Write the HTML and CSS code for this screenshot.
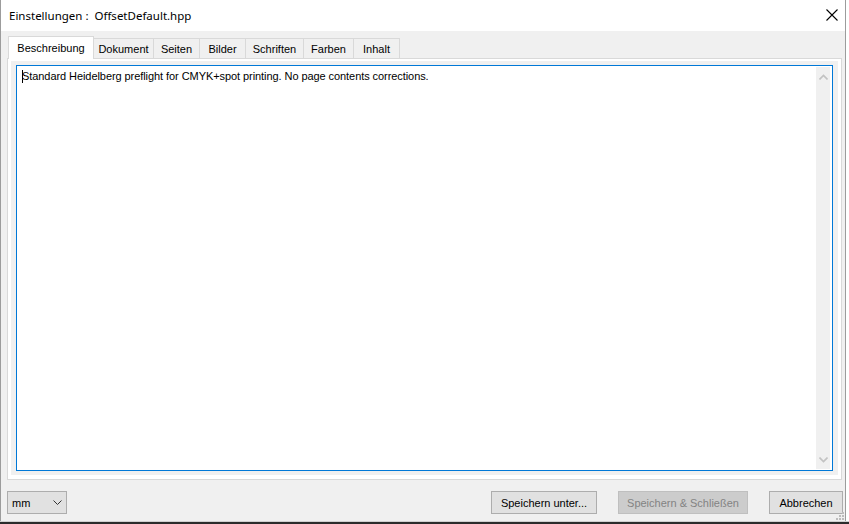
FILE: index.html
```html
<!DOCTYPE html>
<html>
<head>
<meta charset="utf-8">
<link rel="stylesheet" href="styles.css">
</head>
<body>
<div class="window">
  <div class="titlebar">
    <span class="title">Einstellungen :&nbsp; OffsetDefault.hpp</span>
    <svg class="close" width="12" height="12" viewBox="0 0 12 12"><path d="M0.5 0.5 L11.5 11.5 M11.5 0.5 L0.5 11.5" stroke="#000" stroke-width="1.1" fill="none"/></svg>
  </div>
  <div class="content">
    <div class="tabs">
      <div class="tab active w1">Beschreibung</div>
      <div class="tab w2">Dokument</div>
      <div class="tab w3">Seiten</div>
      <div class="tab w3">Bilder</div>
      <div class="tab w5">Schriften</div>
      <div class="tab w6">Farben</div>
      <div class="tab w3">Inhalt</div>
    </div>
    <div class="panel">
      <div class="well">
        <div class="editor">
          <div class="text"><span class="caret"></span>Standard Heidelberg preflight for CMYK+spot printing. No page contents corrections.</div>
          <div class="scrollbar">
            <svg width="9" height="6" viewBox="0 0 9 6"><path d="M0.5 5.5 L4.5 1.5 L8.5 5.5" stroke="#c2c2c2" stroke-width="1.6" fill="none"/></svg>
            <svg width="9" height="6" viewBox="0 0 9 6"><path d="M0.5 0.5 L4.5 4.5 L8.5 0.5" stroke="#c2c2c2" stroke-width="1.6" fill="none"/></svg>
          </div>
        </div>
      </div>
    </div>
    <div class="footer">
      <div class="combo"><span>mm</span><svg width="9" height="5" viewBox="0 0 9 5"><path d="M0.5 0.5 L4.5 4.5 L8.5 0.5" stroke="#333" stroke-width="1" fill="none"/></svg></div>
      <div class="spacer"></div>
      <div class="btn b1">Speichern unter...</div>
      <div class="btn b2 disabled">Speichern &amp; Schließen</div>
      <div class="btn b3">Abbrechen</div>
    </div>
    <svg class="grip" width="8" height="8" viewBox="0 0 8 8" fill="#bcbcbc"><rect x="6" y="0" width="2" height="2"/><rect x="3" y="3" width="2" height="2"/><rect x="6" y="3" width="2" height="2"/><rect x="0" y="6" width="2" height="2"/><rect x="3" y="6" width="2" height="2"/><rect x="6" y="6" width="2" height="2"/></svg>
  </div>
</div>
<div class="desktop"></div>
</body>
</html>
```
FILE: styles.css
```css
html, body {
  margin: 0;
  padding: 0;
  background: #ffffff;
  width: 849px;
  height: 524px;
  overflow: hidden;
}
.window {
  width: 846px;
  height: 521px;
  box-sizing: border-box;
  border-left: 1px solid #9c9c9c;
  border-right: 1px solid #9c9c9c;
  display: flex;
  flex-direction: column;
  font-family: "Liberation Sans", Arial, sans-serif;
  font-size: 11px;
  color: #000;
}
.titlebar {
  height: 31px;
  background: #fff;
  display: flex;
  align-items: center;
  padding-left: 8px;
  padding-right: 7px;
  flex: none;
}
.title {
  font-family: "Noto Sans", "Open Sans", sans-serif;
  font-size: 11.5px;
  flex: 1;
  margin-top: -1px;
}
.close {
  margin-top: -2px;
}
.content {
  flex: 1;
  background: #f0f0f0;
  position: relative;
  padding: 6px 2px 0 6px;
  display: flex;
  flex-direction: column;
}
.tabs {
  display: flex;
  align-items: flex-end;
  height: 22px;
  padding-left: 1px;
  position: relative;
  z-index: 2;
  margin-bottom: -1px;
}
.tab {
  box-sizing: border-box;
  height: 20px;
  border: 1px solid #d9d9d9;
  border-bottom: none;
  margin-left: -1px;
  margin-bottom: 1px;
  background: #f0f0f0;
  display: flex;
  align-items: center;
  justify-content: center;
  padding-top: 1px;
}
.tab.active {
  height: 23px;
  background: #fff;
  margin-bottom: 0;
  position: relative;
  z-index: 3;
  padding-top: 0;
  padding-bottom: 1px;
}
.tab:first-child { margin-left: 0; }
.w1 { width: 86px; }
.w2 { width: 61px; }
.w3 { width: 47px; }
.w5 { width: 59px; }
.w6 { width: 51px; }
.panel {
  width: 835px;
  height: 422px;
  box-sizing: border-box;
  border: 1px solid #d9d9d9;
  background: #fff;
  padding: 2px 3px 4px 3px;
  display: flex;
}
.well {
  flex: 1;
  background: #f0f0f0;
  padding: 4px 5px 4px 5px;
  display: flex;
}
.editor {
  flex: 1;
  border: 1px solid #0078d7;
  background: #fff;
  display: flex;
}
.text {
  flex: 1;
  padding: 4px 0 0 5px;
  line-height: 13px;
  white-space: nowrap;
  letter-spacing: -0.07px;
}
.caret {
  display: inline-block;
  width: 1px;
  height: 13px;
  background: #000;
  vertical-align: top;
  margin-right: -1px;
}
.scrollbar {
  width: 14px;
  margin: 1px 2px 1px 0;
  background: #f0f0f0;
  display: flex;
  flex-direction: column;
  justify-content: space-between;
  align-items: center;
  padding: 7px 0 6px;
}
.footer {
  display: flex;
  align-items: center;
  margin-top: 11px;
  padding-left: 0;
}
.combo {
  box-sizing: border-box;
  width: 60px;
  height: 23px;
  background: #e1e1e1;
  border: 1px solid #adadad;
  display: flex;
  align-items: center;
  justify-content: space-between;
  padding: 0 4px 0 4px;
  color: #000;
}
.spacer { flex: 1; }
.btn {
  box-sizing: border-box;
  height: 23px;
  background: #e1e1e1;
  border: 1px solid #adadad;
  display: flex;
  align-items: center;
  justify-content: center;
}
.b1 { width: 106px; margin-right: 21px; }
.b2 { width: 130px; margin-right: 21px; }
.b3 { width: 74px; }
.disabled {
  background: #cccccc;
  border-color: #bfbfbf;
  color: #838383;
}
.grip {
  position: absolute;
  right: 1px;
  bottom: 1px;
}
.desktop {
  height: 3px;
  background: #2b2b2b;
  border-top: 1px solid #cfcfcf;
  box-sizing: border-box;
}
```
